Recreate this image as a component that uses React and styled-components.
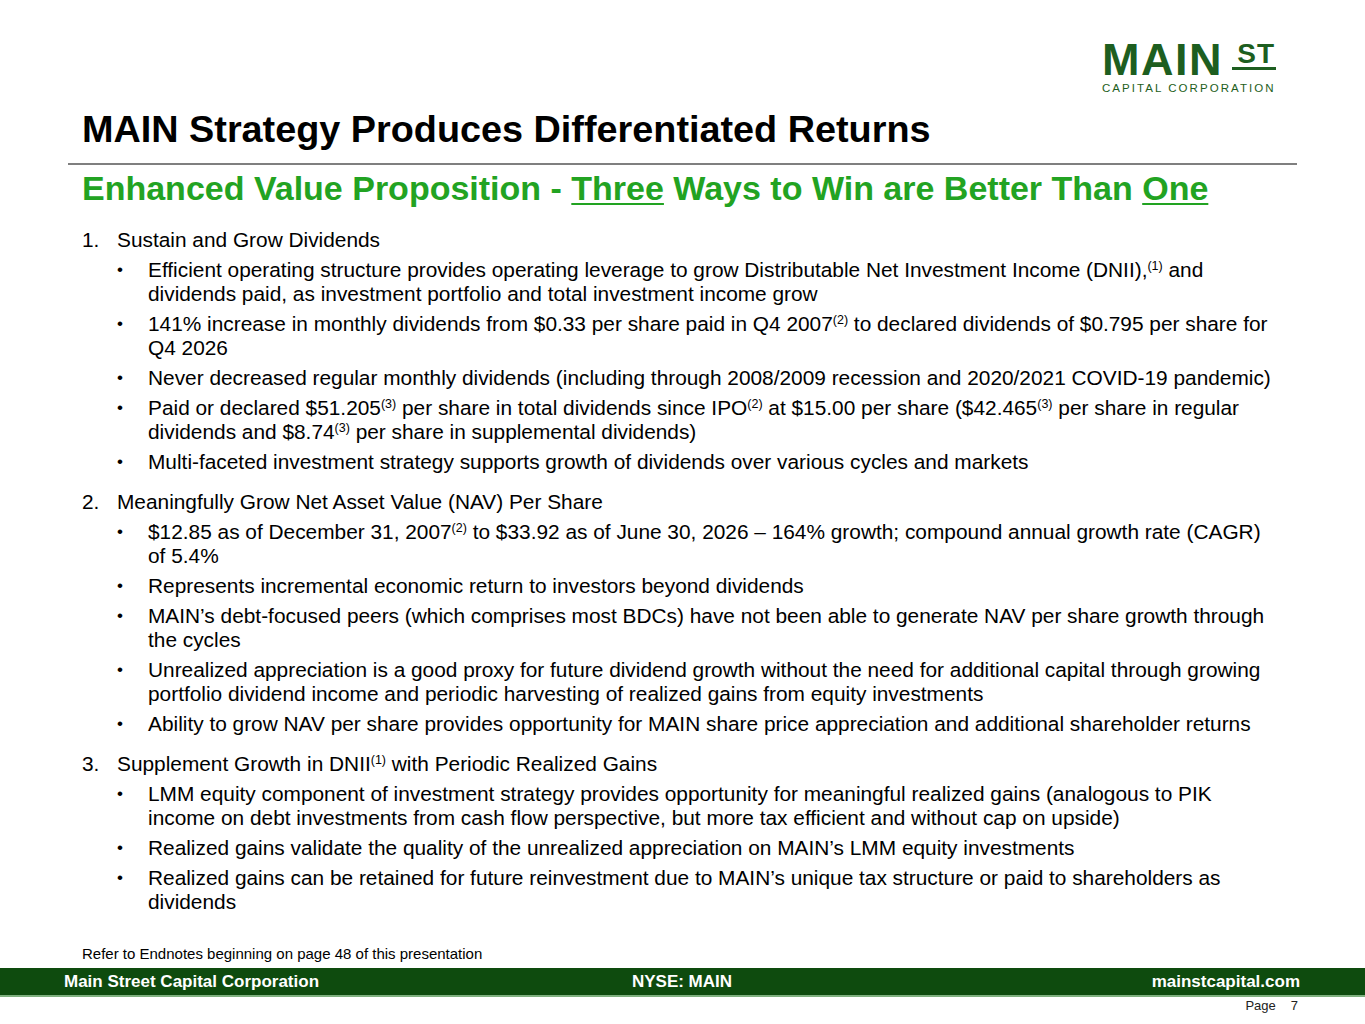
import React from "react";
import styled, { createGlobalStyle } from "styled-components";

const GlobalStyle = createGlobalStyle`
  html, body { margin: 0; padding: 0; background: #ffffff; }
  body { font-family: "Liberation Sans", Arial, sans-serif; color: #000; }
  * { box-sizing: border-box; }
`;

const Slide = styled.div`
  width: 1365px;
  height: 1024px;
  display: flex;
  flex-direction: column;
  background: #fff;
  padding-bottom: 10px;
  overflow: hidden;
`;

const Header = styled.header`
  height: 107px;
  display: flex;
  justify-content: flex-end;
  align-items: flex-start;
  padding: 37px 89px 0 0;
`;

const Logo = styled.div`
  width: 174px;
  display: flex;
  flex-direction: column;
  color: #1d5e20;
`;

const LogoTop = styled.div`
  display: flex;
  justify-content: space-between;
  align-items: flex-start;
`;

const LogoMain = styled.span`
  font-size: 45px;
  line-height: 45px;
  font-weight: 700;
  letter-spacing: 1.5px;
`;

const LogoSt = styled.span`
  margin-top: 4px;
  font-size: 28px;
  line-height: 26px;
  font-weight: 700;
  letter-spacing: 1px;
  padding: 0 1px 0 5px;
  border-bottom: 3px solid #1d5e20;
`;

const LogoSub = styled.span`
  font-size: 11.5px;
  line-height: 12px;
  letter-spacing: 2.05px;
  white-space: nowrap;
`;

const Title = styled.h1`
  margin: 0 0 0 82px;
  font-size: 37.8px;
  line-height: 44px;
  font-weight: 700;
  color: #000;
`;

const Rule = styled.hr`
  margin: 12px 68px 0 68px;
  border: 0;
  height: 2px;
  background: #7f7f7f;
`;

const Subtitle = styled.h2`
  margin: 4px 0 0 82px;
  font-size: 34px;
  line-height: 38px;
  font-weight: 700;
  color: #22a322;
  white-space: nowrap;
`;

const U = styled.span`
  text-decoration: underline;
  text-decoration-thickness: 2px;
  text-underline-offset: 3px;
`;

const Content = styled.ol`
  list-style: none;
  margin: 21px 90px 0 82px;
  padding: 0;
  font-size: 20.85px;
  line-height: 24px;
`;

const Section = styled.li`
  & + & { margin-top: 16px; }
`;

const SectionHead = styled.div`
  display: grid;
  grid-template-columns: 35px 1fr;
`;

const Bullets = styled.ul`
  list-style: none;
  margin: 0;
  padding: 0 0 0 35px;
`;

const Bullet = styled.li`
  display: grid;
  grid-template-columns: 31px 1fr;
  margin-top: 6px;
`;

const Dot = styled.span`
  font-size: 17px;
`;

const Sup = styled.sup`
  font-size: 12.5px;
  line-height: 0;
  vertical-align: 7px;
`;

const Bottom = styled.div`
  margin-top: auto;
  display: flex;
  flex-direction: column;
`;

const Note = styled.p`
  margin: 0 0 5px 82px;
  font-size: 15px;
  line-height: 18px;
`;

const FooterBar = styled.footer`
  height: 29px;
  background: #0e4b0e;
  border-bottom: 2px solid #7fb07f;
  display: grid;
  grid-template-columns: 1fr auto 1fr;
  align-items: center;
  padding: 0 65px 0 64px;
  color: #fff;
  font-size: 17px;
  font-weight: 700;
  line-height: 27px;
`;

const FootCell = styled.span`
  justify-self: ${(p) => p.$align || "start"};
`;

const PageNo = styled.div`
  margin-top: 1px;
  align-self: flex-end;
  margin-right: 67px;
  display: flex;
  gap: 15px;
  font-size: 13px;
  line-height: 16px;
  color: #222;
`;

const sections = [
  {
    n: "1.",
    title: "Sustain and Grow Dividends",
    items: [
      <>Efficient operating structure provides operating leverage to grow Distributable Net Investment Income (DNII),<Sup>(1)</Sup> and dividends paid, as investment portfolio and total investment income grow</>,
      <>141% increase in monthly dividends from $0.33 per share paid in Q4 2007<Sup>(2)</Sup> to declared dividends of $0.795 per share for Q4 2026</>,
      <>Never decreased regular monthly dividends (including through 2008/2009 recession and 2020/2021 COVID-19 pandemic)</>,
      <>Paid or declared $51.205<Sup>(3)</Sup> per share in total dividends since IPO<Sup>(2)</Sup> at $15.00 per share ($42.465<Sup>(3)</Sup> per share in regular dividends and $8.74<Sup>(3)</Sup> per share in supplemental dividends)</>,
      <>Multi-faceted investment strategy supports growth of dividends over various cycles and markets</>,
    ],
  },
  {
    n: "2.",
    title: "Meaningfully Grow Net Asset Value (NAV) Per Share",
    items: [
      <>$12.85 as of December 31, 2007<Sup>(2)</Sup> to $33.92 as of June 30, 2026 – 164% growth; compound annual growth rate (CAGR) of 5.4%</>,
      <>Represents incremental economic return to investors beyond dividends</>,
      <>MAIN’s debt-focused peers (which comprises most BDCs) have not been able to generate NAV per share growth through the cycles</>,
      <>Unrealized appreciation is a good proxy for future dividend growth without the need for additional capital through growing portfolio dividend income and periodic harvesting of realized gains from equity investments</>,
      <>Ability to grow NAV per share provides opportunity for MAIN share price appreciation and additional shareholder returns</>,
    ],
  },
  {
    n: "3.",
    title: <>Supplement Growth in DNII<Sup>(1)</Sup> with Periodic Realized Gains</>,
    items: [
      <>LMM equity component of investment strategy provides opportunity for meaningful realized gains (analogous to PIK income on debt investments from cash flow perspective, but more tax efficient and without cap on upside)</>,
      <>Realized gains validate the quality of the unrealized appreciation on MAIN’s LMM equity investments</>,
      <>Realized gains can be retained for future reinvestment due to MAIN’s unique tax structure or paid to shareholders as dividends</>,
    ],
  },
];

export default function App() {
  return (
    <>
      <GlobalStyle />
      <Slide>
        <Header>
          <Logo>
            <LogoTop>
              <LogoMain>MAIN</LogoMain>
              <LogoSt>ST</LogoSt>
            </LogoTop>
            <LogoSub>CAPITAL CORPORATION</LogoSub>
          </Logo>
        </Header>
        <Title>MAIN Strategy Produces Differentiated Returns</Title>
        <Rule />
        <Subtitle>
          Enhanced Value Proposition - <U>Three</U> Ways to Win are Better Than <U>One</U>
        </Subtitle>
        <Content>
          {sections.map((s) => (
            <Section key={s.n}>
              <SectionHead>
                <span>{s.n}</span>
                <span>{s.title}</span>
              </SectionHead>
              <Bullets>
                {s.items.map((it, i) => (
                  <Bullet key={i}>
                    <Dot>•</Dot>
                    <span>{it}</span>
                  </Bullet>
                ))}
              </Bullets>
            </Section>
          ))}
        </Content>
        <Bottom>
          <Note>Refer to Endnotes beginning on page 48 of this presentation</Note>
          <FooterBar>
            <FootCell>Main Street Capital Corporation</FootCell>
            <FootCell $align="center">NYSE: MAIN</FootCell>
            <FootCell $align="end">mainstcapital.com</FootCell>
          </FooterBar>
          <PageNo>
            <span>Page</span>
            <span>7</span>
          </PageNo>
        </Bottom>
      </Slide>
    </>
  );
}
